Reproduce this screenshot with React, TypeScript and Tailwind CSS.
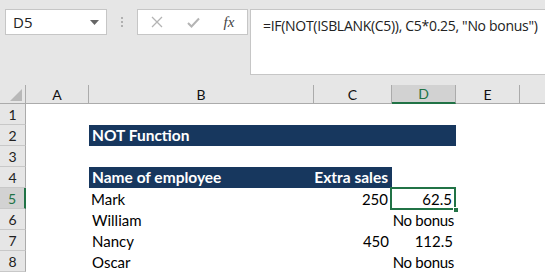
import React from "react";

const cellFont = { fontFamily: "Lato, 'Liberation Sans', sans-serif" };

function RowHeader({ n, active }: { n: number; active?: boolean }) {
  return (
    <div
      className={
        "w-[26px] shrink-0 h-full flex items-center justify-center border-b border-[#c8c8c8] text-[14px] " +
        (active
          ? "bg-[#d2d2d2] text-[#217346] border-r-2 border-r-[#217346]"
          : "bg-[#e6e6e6] text-[#222] border-r border-r-[#ababab]")
      }
      style={cellFont}
    >
      {n}
    </div>
  );
}

export default function App() {
  const cols = [
    { l: "A", w: "w-[63px]" },
    { l: "B", w: "w-[225px]" },
    { l: "C", w: "w-[78px]" },
    { l: "D", w: "w-[64px]" },
    { l: "E", w: "w-[64px]" },
    { l: "", w: "flex-1" },
  ];
  return (
    <div className="w-[545px] h-[272px] overflow-hidden bg-[#e6e6e6] flex flex-col" style={cellFont}>
      {/* Toolbar */}
      <div className="h-[85px] shrink-0 flex items-start pt-[9px] pl-[5px]">
        <div className="w-[102px] h-[26px] shrink-0 bg-white border border-[#c6c6c6] flex items-center justify-between pl-[7px] pr-[7px]">
          <span className="text-[15px] text-[#222]" style={{ fontFamily: "'Open Sans', sans-serif" }}>D5</span>
          <svg width="9" height="5" viewBox="0 0 9 5"><path d="M0 0H9L4.5 5Z" fill="#666" /></svg>
        </div>
        <div className="w-[30px] h-[26px] shrink-0 flex flex-col items-center justify-center gap-[2px]">
          <div className="w-[2px] h-[2px] bg-[#b0b0b0]" />
          <div className="w-[2px] h-[2px] bg-[#b0b0b0]" />
          <div className="w-[2px] h-[2px] bg-[#b0b0b0]" />
        </div>
        <div className="w-[111px] h-[26px] shrink-0 bg-white border border-[#c6c6c6] flex items-center">
          <div className="w-[37px] flex justify-center">
            <svg width="12" height="12" viewBox="0 0 12 12"><path d="M1 1L11 11M11 1L1 11" stroke="#b4b4b4" strokeWidth="1.3" /></svg>
          </div>
          <div className="w-[37px] flex justify-center">
            <svg width="13" height="11" viewBox="0 0 13 11"><path d="M1 6L4.5 9.5L12 1.5" stroke="#b4b4b4" strokeWidth="2" fill="none" /></svg>
          </div>
          <div className="w-[34px] flex justify-center">
            <span className="italic text-[15px] text-[#444]" style={{ fontFamily: "'Liberation Serif', serif" }}>fx</span>
          </div>
        </div>
        <div className="ml-[2px] flex-1 min-w-0 h-[66px] bg-white border-t border-b border-l border-[#c6c6c6] pl-[12px] pt-[3px] overflow-hidden">
          <span className="text-[14px] text-[#222] whitespace-nowrap" style={{ fontFamily: "'Open Sans', sans-serif", letterSpacing: "-0.3px" }}>
            =IF(NOT(ISBLANK(C5)), C5*0.25, "No bonus")
          </span>
        </div>
      </div>

      {/* Column headers */}
      <div className="h-[19px] shrink-0 flex border-b border-[#ababab]">
        <div className="w-[26px] shrink-0 relative border-r border-[#ababab]">
          <svg className="absolute left-[10px] top-[4px]" width="12" height="12" viewBox="0 0 12 12"><path d="M12 0V12H0Z" fill="#b8b8b8" /></svg>
        </div>
        {cols.map((c, i) =>
          c.l === "D" ? (
            <div key={i} className={c.w + " shrink-0 bg-[#d2d2d2] text-[#217346] text-[14px] flex items-center justify-center border-b-2 border-[#217346] border-r border-r-[#ababab] -mb-[1px]"}>
              {c.l}
            </div>
          ) : (
            <div key={i} className={c.w + (c.l ? " shrink-0 border-r border-[#ababab]" : "") + " text-[14px] text-[#111] flex items-center justify-center"}>
              {c.l}
            </div>
          )
        )}
      </div>

      {/* Grid */}
      <div className="flex-1 flex flex-col bg-white text-[15px] text-black">
        {/* Row 1 */}
        <div className="h-[21px] flex"><RowHeader n={1} /><div className="flex-1" /></div>
        {/* Row 2 */}
        <div className="h-[21px] flex">
          <RowHeader n={2} />
          <div className="w-[63px]" />
          <div className="w-[367px] bg-[#17375e] text-white font-bold text-[15.5px] flex items-center pl-[3px]">NOT Function</div>
          <div className="flex-1" />
        </div>
        {/* Row 3 */}
        <div className="h-[21px] flex"><RowHeader n={3} /><div className="flex-1" /></div>
        {/* Row 4 */}
        <div className="h-[21px] flex">
          <RowHeader n={4} />
          <div className="w-[63px]" />
          <div className="w-[225px] bg-[#17375e] text-white font-bold text-[15.5px] flex items-center pl-[3px]">Name of employee</div>
          <div className="w-[78px] bg-[#17375e] text-white font-bold text-[15.5px] flex items-center justify-end pr-[4px] whitespace-nowrap">Extra sales</div>
          <div className="flex-1" />
        </div>
        {/* Row 5 */}
        <div className="h-[21px] flex">
          <RowHeader n={5} active />
          <div className="w-[62px]" />
          <div className="w-[225px] flex items-center pl-[3px] pt-[2px]">Mark</div>
          <div className="w-[78px] flex items-center justify-end pr-[3px] pt-[2px]">250</div>
          <div className="w-[64px] relative flex items-center justify-end pr-[3px] pt-[2px]">
            62.5
            <div className="absolute -left-[1px] -top-[1px] w-[66px] h-[23px] border-2 border-[#217346]" />
            <div className="absolute right-[-4px] bottom-[-4px] w-[6px] h-[6px] bg-[#217346] border border-white" />
          </div>
          <div className="flex-1" />
        </div>
        {/* Row 6 */}
        <div className="h-[21px] flex">
          <RowHeader n={6} />
          <div className="w-[63px]" />
          <div className="w-[225px] flex items-center pl-[3px] pt-[2px]">William</div>
          <div className="w-[78px]" />
          <div className="w-[64px] flex items-center justify-end pr-[2px] pt-[2px] whitespace-nowrap tracking-[-0.3px]">No bonus</div>
          <div className="flex-1" />
        </div>
        {/* Row 7 */}
        <div className="h-[21px] flex">
          <RowHeader n={7} />
          <div className="w-[63px]" />
          <div className="w-[225px] flex items-center pl-[3px] pt-[2px]">Nancy</div>
          <div className="w-[78px] flex items-center justify-end pr-[3px] pt-[2px]">450</div>
          <div className="w-[64px] flex items-center justify-end pr-[3px] pt-[2px]">112.5</div>
          <div className="flex-1" />
        </div>
        {/* Row 8 */}
        <div className="h-[21px] flex">
          <RowHeader n={8} />
          <div className="w-[63px]" />
          <div className="w-[225px] flex items-center pl-[3px] pt-[2px]">Oscar</div>
          <div className="w-[78px]" />
          <div className="w-[64px] flex items-center justify-end pr-[2px] pt-[2px] whitespace-nowrap tracking-[-0.3px]">No bonus</div>
          <div className="flex-1" />
        </div>
      </div>
    </div>
  );
}
